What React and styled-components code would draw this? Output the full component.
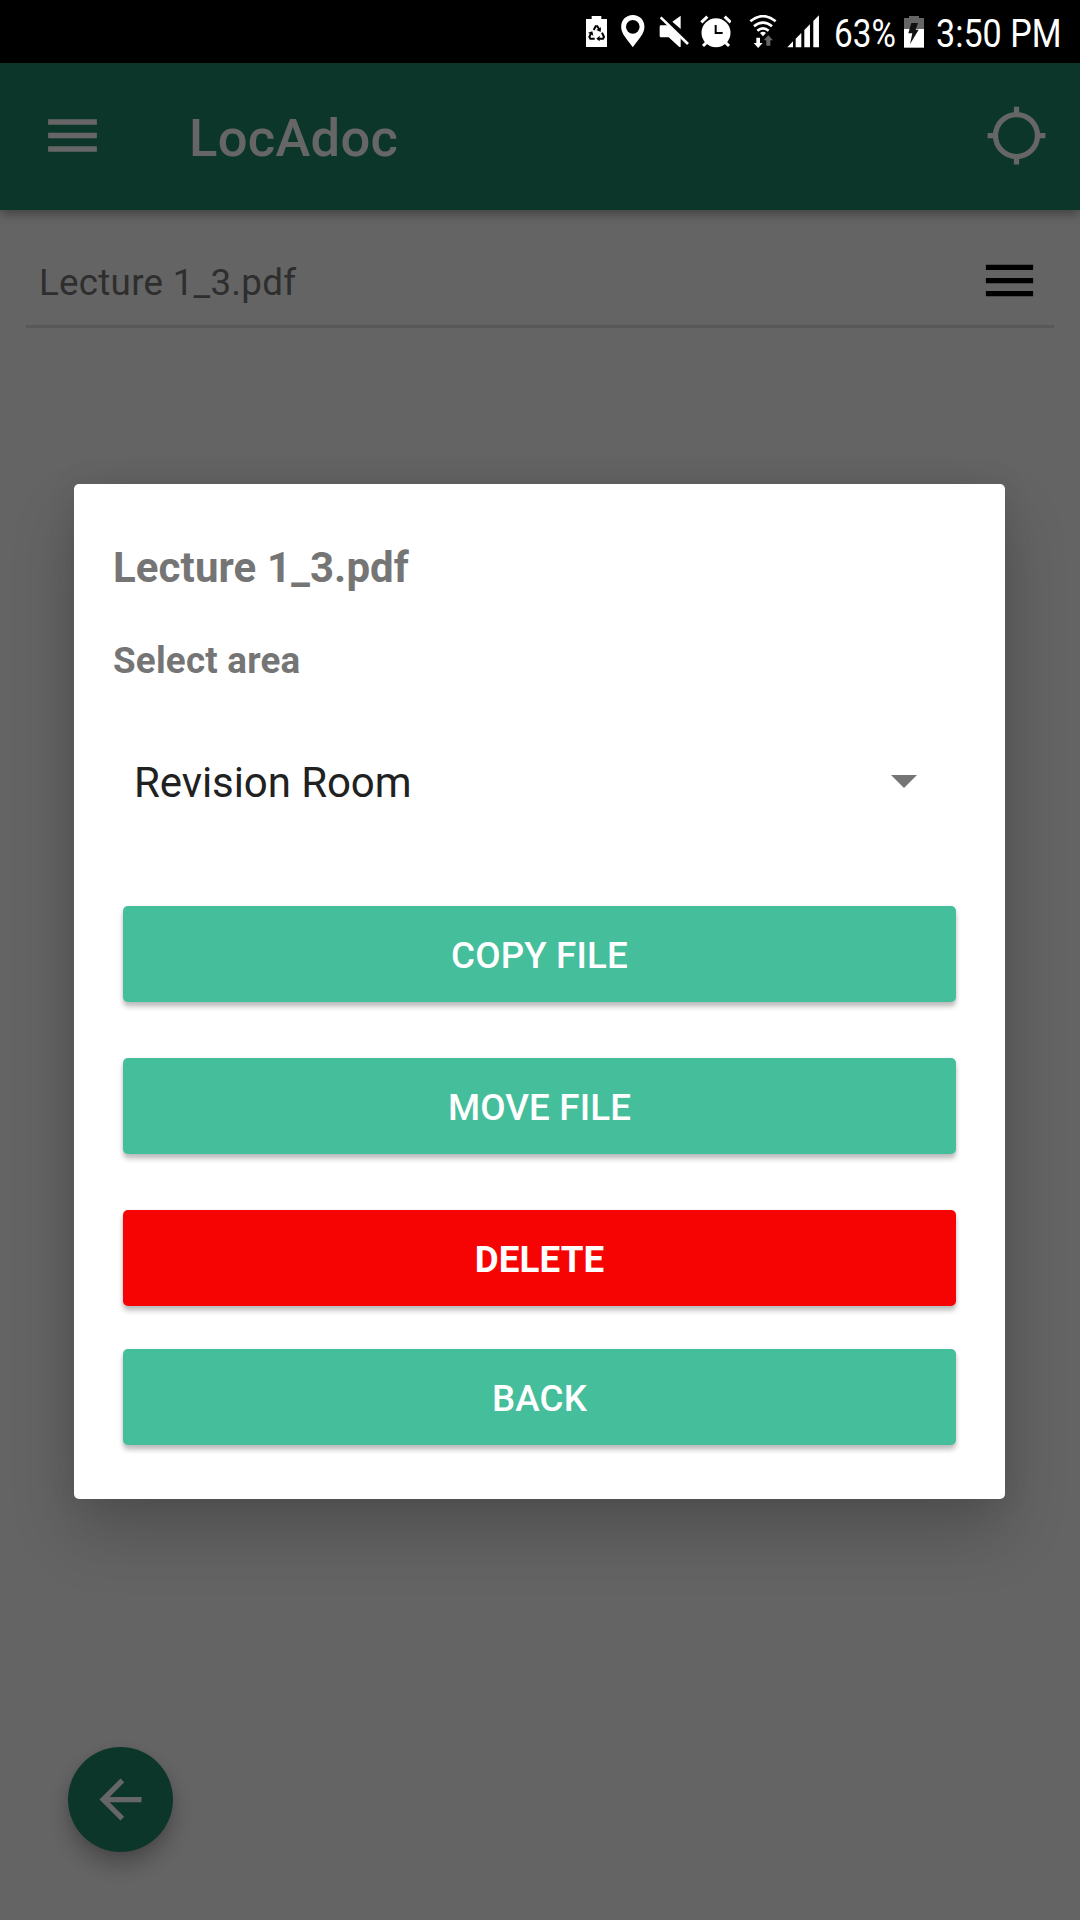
import React from "react";
import styled, { createGlobalStyle } from "styled-components";

const GlobalStyle = createGlobalStyle`
  * { box-sizing: border-box; }
  body { margin: 0; background: #000; font-family: Roboto, "Noto Sans", sans-serif; }
`;

const Screen = styled.div`
  position: relative;
  width: 1080px;
  height: 1920px;
  overflow: hidden;
  display: flex;
  flex-direction: column;
  background: #fafafa;
`;

const StatusBar = styled.header`
  flex: none;
  display: flex;
  justify-content: flex-end;
  height: 63px;
  padding: 15px 17px 0 0;
  background: #000;
`;

const StatusIcon = styled.svg`
  display: block;
  flex: none;
  width: ${(p) => p.$w}px;
  height: 33px;
  margin-right: ${(p) => p.$gap}px;
  fill: #fff;
`;

const StatusText = styled.span`
  flex: none;
  width: ${(p) => p.$w}px;
  height: 36px;
  line-height: 37px;
  font-size: 38.5px;
  color: #fff;
  white-space: nowrap;
  transform: scaleX(${(p) => p.$squeeze});
  transform-origin: left center;
`;

const Content = styled.div`
  position: relative;
  flex: 1;
  display: flex;
  flex-direction: column;
`;

const AppBar = styled.nav`
  flex: none;
  display: flex;
  align-items: center;
  height: 147px;
  padding: 0 32px 2px 40px;
  background: #21876c;
  box-shadow: 0 4px 10px rgba(0, 0, 0, 0.35);
`;

const Title = styled.h1`
  flex: 1;
  margin: 0 0 0 84px;
  padding-top: 5px;
  font-size: 52.5px;
  line-height: 62px;
  font-weight: 500;
  letter-spacing: 0.3px;
  color: #fff;
`;

const Icon = styled.svg`
  display: block;
  flex: none;
  width: ${(p) => p.$size}px;
  height: ${(p) => p.$size}px;
`;

const FileRow = styled.div`
  flex: none;
  display: flex;
  align-items: center;
  justify-content: space-between;
  height: 118px;
  margin: 0 26px;
  padding: 25px 13px 0 13px;
  border-bottom: 3px solid #dcdcdc;
`;

const FileName = styled.span`
  padding-top: 4px;
  font-size: 36.75px;
  line-height: 43px;
  letter-spacing: 0.27px;
  color: #737373;
`;

const Fab = styled.button`
  position: absolute;
  left: 68px;
  bottom: 68px;
  display: flex;
  align-items: center;
  justify-content: center;
  width: 105px;
  height: 105px;
  padding: 0;
  border: 0;
  border-radius: 50%;
  background: #21876c;
  box-shadow: 0 13px 22px rgba(0, 0, 0, 0.25), 0 2px 8px rgba(0, 0, 0, 0.08);
`;

const Scrim = styled.div`
  position: absolute;
  inset: 0;
  display: flex;
  flex-direction: column;
  align-items: center;
  padding: 421px 1px 0 0;
  background: rgba(0, 0, 0, 0.6);
`;

const Dialog = styled.section`
  width: 931px;
  height: 1015px;
  padding: 59px 49px 0;
  border-radius: 5px;
  background: #fff;
  box-shadow: 0 34px 64px rgba(0, 0, 0, 0.2), 0 0 30px rgba(0, 0, 0, 0.08);
`;

const Heading = styled.h2`
  margin: 0 0 0 -10px;
  font-size: ${(p) => p.$size}px;
  line-height: 50px;
  font-weight: 700;
  letter-spacing: 0.1px;
  color: #757575;
`;

const SubHeading = styled(Heading)`
  margin-top: 43px;
  letter-spacing: 0.22px;
`;

const Select = styled.div`
  display: flex;
  align-items: center;
  justify-content: space-between;
  height: 84px;
  margin-top: 54px;
  padding: 2px 39px 0 11px;
  font-size: 42px;
  line-height: 50px;
  letter-spacing: -0.08px;
  color: #212121;
`;

const Caret = styled.svg`
  display: block;
  width: 26px;
  height: 13px;
  margin-top: -3px;
  fill: #757575;
`;

const Actions = styled.div`
  display: flex;
  flex-direction: column;
  gap: 56px;
  margin-top: 82px;
`;

const ActionButton = styled.button`
  display: flex;
  align-items: center;
  justify-content: center;
  width: 833px;
  height: 96px;
  margin-top: ${(p) => p.$lift || 0}px;
  padding: 3px 0 0;
  border: 0;
  border-radius: 5px;
  background: ${(p) => (p.$danger ? "#f60404" : "#44be9b")};
  box-shadow: 0 5px 5px rgba(0, 0, 0, 0.22), 0 1px 4px rgba(0, 0, 0, 0.1);
  font-family: inherit;
  font-size: 36.75px;
  font-weight: ${(p) => (p.$danger ? 700 : 500)};
  letter-spacing: 0.13px;
  color: #fff;
`;

function MenuBars({ size, color }) {
  return (
    <Icon $size={size} viewBox="0 0 24 24" fill={color}>
      <path d="M3 18h18v-2H3v2zm0-5h18v-2H3v2zm0-7v2h18V6H3z" />
    </Icon>
  );
}

function StatusIcons() {
  return (
    <>
      <StatusIcon $w={21} $gap={14.7} viewBox="48 45 63 99">
        <path d="M65 48h29v9h17v84H48V57h17z" />
        <g fill="none" stroke="#000" strokeWidth="6">
          <path d="M71 90l6-11h5l7 11M64 98l-6 13 3 5h13M96 98l6 13-3 5H86" />
        </g>
        <path d="M93 82l-1 14-13-6zM54 98l13-4 3 13zM89 107v17l-10-8z" fill="#000" />
      </StatusIcon>
      <StatusIcon $w={23.6} $gap={14} viewBox="155 45 71 99">
        <path
          fillRule="evenodd"
          d="M190.500 45c-20 0-35 15-35 35 0 22 17 36 35 62 18-26 35-40 35-62 0-20-15-35-35-35zm0 15a20.500 20.500 0 1 1 0 41 20.500 20.500 0 0 1 0-41z"
        />
      </StatusIcon>
      <StatusIcon $w={30} $gap={10.7} viewBox="268 45 90 99">
        <path d="M333 47v40l-25-22zM274 76h20l39 36v29h-4l-32-29h-23q-4 0-4-5V80q0-4 4-4z" />
        <path d="M273 52l82 80" stroke="#fff" strokeWidth="8" />
      </StatusIcon>
      <StatusIcon $w={31.7} $gap={17.6} viewBox="390 45 95 99">
        <circle cx="438" cy="98" r="43.500" />
        <path
          d="M394 67l18-17M464 50l18 17M409 128l-10 10M467 128l10 10"
          fill="none"
          stroke="#fff"
          strokeWidth="9"
        />
        <path d="M437 75v24h21" fill="none" stroke="#000" strokeWidth="6" />
      </StatusIcon>
      <StatusIcon $w={28} $gap={10.4} viewBox="538 45 84 99">
        <g fill="none" stroke="#fff" strokeWidth="8">
          <path d="M542 64q38-31 76 0M553 79q27-22 54 0M563 92q17-14 34 0" />
        </g>
        <path d="M571 99q9-7 18 0l-9 10z" />
        <path d="M560 113h11v16h8l-13.500 15-13.500-15h8z" />
        <path d="M590 137h12v-16h8l-14-15-14 15h8z" fill="#666" />
      </StatusIcon>
      <StatusIcon $w={32.300} $gap={14.500} viewBox="653 45 97 99">
        <path d="M654 142l17-18v18zM679 142v-26l17-17v43zM705 142V90l17-17v69zM732 142V63l17-17v96z" />
      </StatusIcon>
    </>
  );
}

export default function App() {
  return (
    <>
      <GlobalStyle />
      <Screen>
        <StatusBar>
          <StatusIcons />
          <StatusText $w={70} $squeeze={0.865}>63%</StatusText>
          <StatusIcon $w={20} $gap={12} viewBox="252 45 60 99">
            <path d="M267 48h30v6h15v33h-60V54h15z" fill="#666" />
            <path d="M252 87h60v56h-60z" />
            <path d="M274 69h20l-7 20h9l-26 44 7-33h-12z" fill="#111" />
          </StatusIcon>
          <StatusText $w={127} $squeeze={0.886}>3:50 PM</StatusText>
        </StatusBar>
        <Content>
          <AppBar>
            <MenuBars size={65} color="#fff" />
            <Title>LocAdoc</Title>
            <Icon $size={63} viewBox="0 0 24 24" fill="none" stroke="#fff" strokeWidth="2">
              <circle cx="12" cy="12" r="8" />
              <path d="M12 1v3M12 20v3M1 12h3M20 12h3" />
            </Icon>
          </AppBar>
          <FileRow>
            <FileName>Lecture 1_3.pdf</FileName>
            <MenuBars size={63} color="#000" />
          </FileRow>
          <Fab>
            <Icon $size={63} viewBox="0 0 24 24" fill="#fff">
              <path d="M20 11H7.830l5.590-5.590L12 4l-8 8 8 8 1.410-1.410L7.830 13H20v-2z" />
            </Icon>
          </Fab>
          <Scrim>
            <Dialog>
              <Heading $size={42}>Lecture 1_3.pdf</Heading>
              <SubHeading $size={36.75}>Select area</SubHeading>
              <Select>
                Revision Room
                <Caret viewBox="0 0 26 13">
                  <path d="M0 0h26L13 13z" />
                </Caret>
              </Select>
              <Actions>
                <ActionButton>COPY FILE</ActionButton>
                <ActionButton>MOVE FILE</ActionButton>
                <ActionButton $danger>DELETE</ActionButton>
                <ActionButton $lift={-13}>BACK</ActionButton>
              </Actions>
            </Dialog>
          </Scrim>
        </Content>
      </Screen>
    </>
  );
}
